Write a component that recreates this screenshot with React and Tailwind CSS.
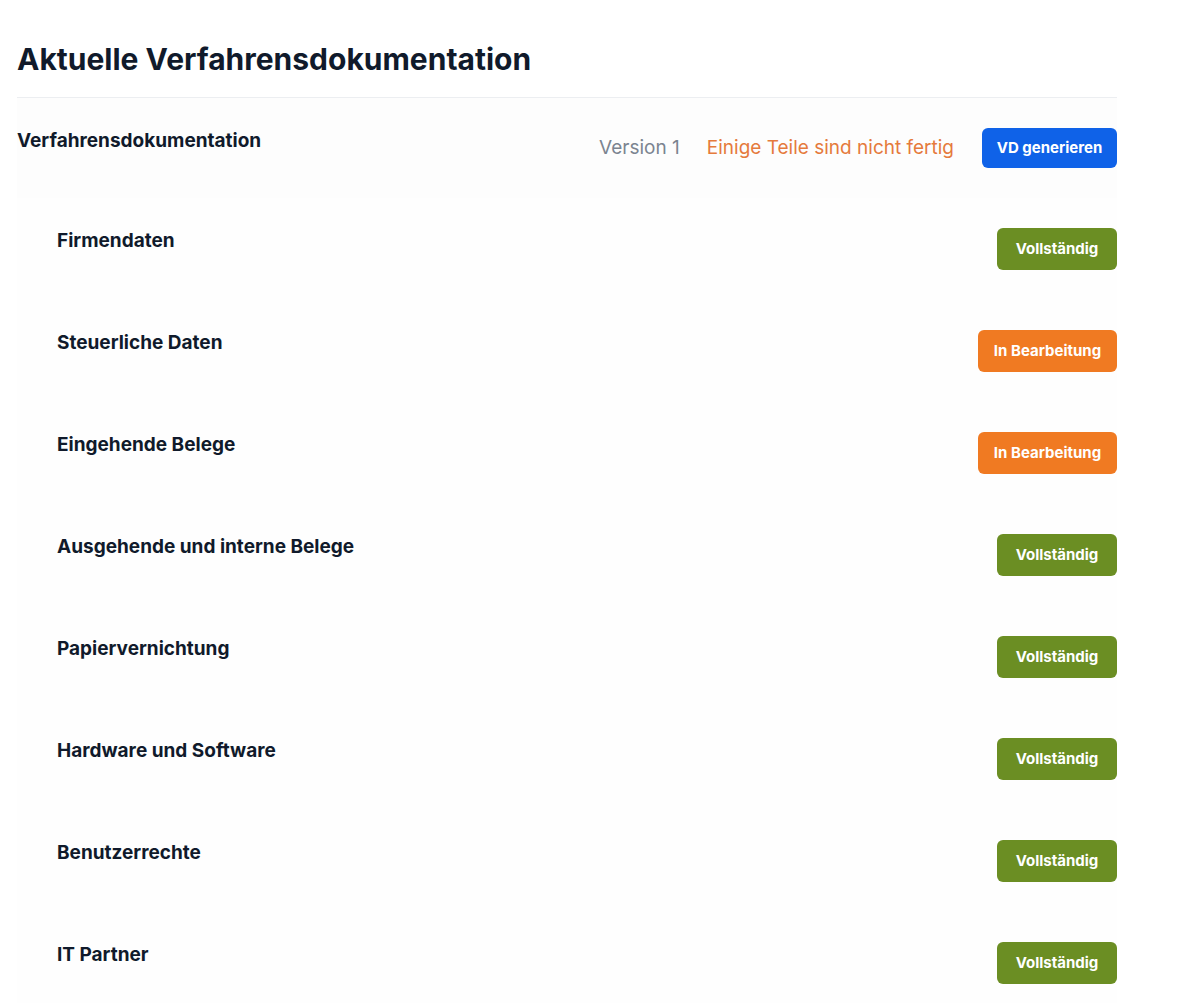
import React from 'react';

const sections = [
  { name: 'Firmendaten', status: 'done' },
  { name: 'Steuerliche Daten', status: 'progress' },
  { name: 'Eingehende Belege', status: 'progress' },
  { name: 'Ausgehende und interne Belege', status: 'done' },
  { name: 'Papiervernichtung', status: 'done' },
  { name: 'Hardware und Software', status: 'done' },
  { name: 'Benutzerrechte', status: 'done' },
  { name: 'IT Partner', status: 'done' },
];

const StatusButton = ({ status }) => {
  if (status === 'done') {
    return (
      <button className="h-[42px] w-[120px] rounded-md bg-[#6b8e23] text-[15px] font-bold text-white">
        Vollständig
      </button>
    );
  }
  return (
    <button className="h-[42px] w-[139px] rounded-md bg-[#f07a22] text-[15px] font-bold text-white">
      In Bearbeitung
    </button>
  );
};

const App = () => {
  return (
    <div className="min-h-screen bg-white font-['Inter',sans-serif] text-[#101a2b]">
      <div className="ml-[17px] w-[1100px] pt-[40px]">
        <h1 className="text-[30px] font-bold leading-[38px]">
          Aktuelle Verfahrensdokumentation
        </h1>
        <div className="mt-[19px] border-t border-[#eceef1]" />

        <div className="flex items-start justify-between bg-[#fdfdfd] pt-[29px] pb-[30px]">
          <h2 className="pt-[2px] text-[19px] font-bold leading-6">Verfahrensdokumentation</h2>
          <div className="flex items-center pt-[1px]">
            <span className="text-[19px] text-[#7b8490]">Version 1</span>
            <span className="ml-[27px] text-[19px] text-[#e57a3c]">Einige Teile sind nicht fertig</span>
            <button className="ml-[28px] h-[40px] w-[135px] rounded-md bg-[#0f62e8] text-[15px] font-bold text-white">
              VD generieren
            </button>
          </div>
        </div>

        <div className="bg-[#fefefe] pl-[40px]">
          {sections.map((s) => (
            <div key={s.name} className="flex items-start justify-between py-[30px]">
              <span className="pt-[1px] text-[19px] font-bold leading-6">{s.name}</span>
              <StatusButton status={s.status} />
            </div>
          ))}
        </div>
      </div>
    </div>
  );
};

export default App;
